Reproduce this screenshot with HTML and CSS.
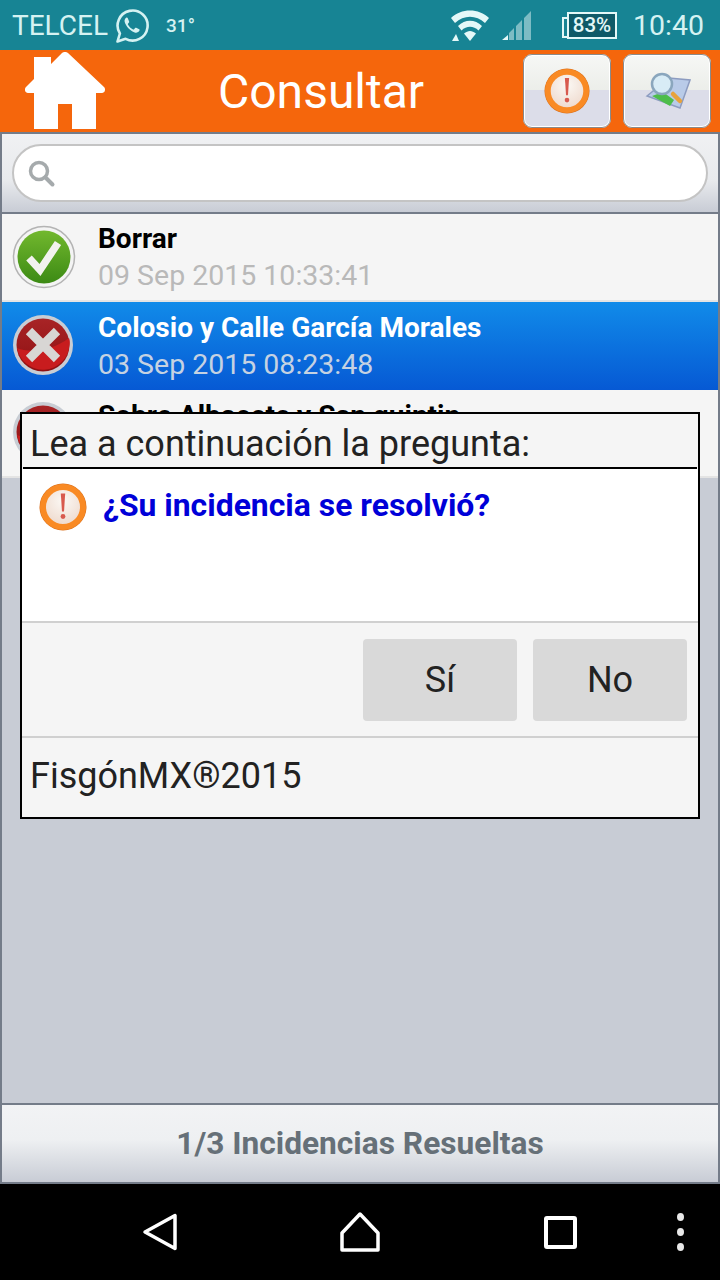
FILE: index.html
```html
<!DOCTYPE html>
<html lang="es">
<head>
    <meta charset="UTF-8">
    <meta name="viewport" content="width=device-width, initial-scale=1.0">
    <title>Consultar</title>
    <link rel="stylesheet" href="styles.css">
</head>
<body>
    <svg class="icon-defs" width="0" height="0">
        <defs>
            <radialGradient id="alert-face" cx="50%" cy="35%" r="65%">
                <stop offset="0" stop-color="#fbf8f4"/>
                <stop offset="1" stop-color="#eed8cb"/>
            </radialGradient>
            <linearGradient id="green-face" x1="0" y1="0" x2="0" y2="1">
                <stop offset="0" stop-color="#72b82e"/>
                <stop offset="1" stop-color="#3c8a14"/>
            </linearGradient>
            <linearGradient id="red-face" x1="0" y1="0" x2="0" y2="1">
                <stop offset="0" stop-color="#a82426"/>
                <stop offset="1" stop-color="#8e1012"/>
            </linearGradient>
            <symbol id="alert" viewBox="0 0 48 48">
                <circle cx="24" cy="24" r="23.500" fill="#d96f1c"/>
                <circle cx="24" cy="24" r="20" fill="url(#alert-face)" stroke="#f98a24" stroke-width="6"/>
                <path d="M21.800 10.500h4.400l-1.200 18h-2z" fill="#d85a4e"/>
                <circle cx="24" cy="33.500" r="2.400" fill="#d85a4e"/>
            </symbol>
            <symbol id="red-disc" viewBox="0 0 64 64">
                <circle cx="31" cy="31" r="30" fill="#c8cdd4"/>
                <circle cx="31" cy="31" r="26.500" fill="url(#red-face)"/>
                <path d="M5 34c14 6 36 2 52-10 1 3 1 5 .500 7A26.500 26.500 0 0 1 5 34z" fill="#c81c1e"/>
            </symbol>
        </defs>
    </svg>

    <div class="status-bar">
        <div class="status-left">
            <span class="carrier">TELCEL</span>
            <svg class="whatsapp" viewBox="0 0 34 36" width="34" height="36">
                <path d="M2.500 33.500l2.400-8A15 15 0 1 1 10.600 30.800z" fill="none" stroke="#d5f2f2" stroke-width="2.600" stroke-linejoin="round"/>
                <path d="M11.500 9.500c-1.500 1-2.300 2.500-1.800 4.500 1 4 5.500 9 10 10.500 2 .6 3.800-.2 4.800-1.900.3-.6.200-1-.3-1.300l-3-1.500c-.5-.2-.8-.1-1.100.3l-1 1.200c-.3.300-.6.400-1 .2-2.200-1-4-2.700-5.200-4.900-.2-.4-.1-.7.200-1l.9-1.100c.3-.4.300-.7.100-1.100l-1.300-3.200c-.3-.7-.7-.9-1.300-.7z" fill="#d5f2f2"/>
            </svg>
            <span class="temp">31°</span>
        </div>
        <div class="status-right">
            <svg class="wifi" viewBox="0 0 40 32" width="40" height="32">
                <path d="M1 8C11 -2 29 -2 39 8l-4 5C26 4.500 14 4.500 5 13z" fill="#e4f8f8"/>
                <path d="M8 16C15 9 25 9 32 16l-3.500 4.500C23.500 15.500 16.500 15.500 11.500 20.500z" fill="#e4f8f8"/>
                <path d="M14 23.500c4-3.500 8-3.500 12 0L20 31z" fill="#e4f8f8"/>
                <path d="M2 31l4-7 3 7z" fill="#e4f8f8"/>
            </svg>
            <svg class="signal" viewBox="0 0 30 30" width="30" height="30">
                <path d="M0 29l6-5v5z" fill="#e4f8f8"/>
                <path d="M7 22l5-5v12H7zM14 15l6-6v20h-6zM22 7l7-7v29h-7z" fill="#7dbcc4"/>
            </svg>
            <div class="battery"><span>83%</span></div>
            <span class="clock">10:40</span>
        </div>
    </div>

    <header class="app-header">
        <svg class="home-icon" viewBox="0 0 84 80" width="84" height="80">
            <path d="M41 1a4 4 0 0 1 3 1l36 34c2 2 1 6-2 6h-6v36H48V53H34v25H10V42H4c-3 0-4-4-2-6l8-8V6h17v7L38 2a4 4 0 0 1 3-1z" fill="#fff"/>
        </svg>
        <h1>Consultar</h1>
        <div class="header-buttons">
            <button class="tool-btn"><svg width="46" height="46"><use href="#alert"/></svg></button>
            <button class="tool-btn">
                <svg viewBox="0 0 48 42" width="48" height="42">
                    <path d="M4 26L26 8l21 2-10 28z" fill="#b9cbe8" stroke="#8d9cc0" stroke-width="1.500"/>
                    <path d="M9 26l11-4 11 8-4 6z" fill="#4dbd4a"/>
                    <path d="M30 24l7 7" stroke="#e8a23c" stroke-width="4.500" stroke-linecap="round"/>
                    <circle cx="19" cy="14" r="10" fill="#d8ecf6" stroke="#8aa6bd" stroke-width="2.500"/>
                </svg>
            </button>
        </div>
    </header>

    <div class="search-bar">
        <div class="search-box">
            <svg viewBox="0 0 30 30" width="30" height="30">
                <circle cx="13" cy="13" r="8.500" fill="none" stroke="#a5aaac" stroke-width="3.500"/>
                <path d="M19.500 19.500l7 7" stroke="#a5aaac" stroke-width="4" stroke-linecap="round"/>
            </svg>
        </div>
    </div>

    <main class="content">
        <ul class="list">
            <li class="list-item">
                <svg class="state-icon" viewBox="0 0 64 64" width="64" height="64">
                    <circle cx="32" cy="32" r="30.500" fill="#f4f4f4" stroke="#b4b4b4" stroke-width="1.500"/>
                    <circle cx="32" cy="32" r="26.500" fill="url(#green-face)"/>
                    <path d="M17 33l11 12 18-27" fill="none" stroke="#f2f2ee" stroke-width="7.500"/>
                </svg>
                <div class="item-text">
                    <div class="item-title">Borrar</div>
                    <div class="item-date">09 Sep 2015 10:33:41</div>
                </div>
            </li>
            <li class="list-item selected">
                <svg class="state-icon" width="64" height="64">
                    <use href="#red-disc"/>
                    <path d="M17 17l28 28M45 17L17 45" stroke="#d8d6d4" stroke-width="9"/>
                </svg>
                <div class="item-text">
                    <div class="item-title">Colosio y Calle García Morales</div>
                    <div class="item-date">03 Sep 2015 08:23:48</div>
                </div>
            </li>
            <li class="list-item">
                <svg class="state-icon" width="64" height="64"><use href="#red-disc"/></svg>
                <div class="item-text">
                    <div class="item-title">Sobre Albacete y San quintin</div>
                </div>
            </li>
        </ul>
    </main>

    <footer class="app-footer">1/3 Incidencias Resueltas</footer>

    <nav class="nav-bar">
        <svg viewBox="0 0 36 38" width="36" height="38" class="nav-icon">
            <path d="M33 2.500v33L3 19z" fill="none" stroke="#fff" stroke-width="3.500" stroke-linejoin="round"/>
        </svg>
        <svg viewBox="0 0 40 40" width="40" height="40" class="nav-icon">
            <path d="M20 2L38 21v17H2V21z" fill="none" stroke="#fff" stroke-width="3.500" stroke-linejoin="round"/>
        </svg>
        <div class="nav-square"></div>
        <div class="nav-dots"><i></i><i></i><i></i></div>
    </nav>

    <div class="dialog">
        <div class="dialog-title">Lea a continuación la pregunta:</div>
        <div class="dialog-body">
            <svg width="48" height="48"><use href="#alert"/></svg>
            <span class="dialog-question">¿Su incidencia se resolvió?</span>
        </div>
        <div class="dialog-actions">
            <button class="dialog-btn">Sí</button>
            <button class="dialog-btn">No</button>
        </div>
        <div class="dialog-foot">FisgónMX®2015</div>
    </div>
</body>
</html>
```

FILE: styles.css
```css
* {
    box-sizing: border-box;
}

body {
    font-family: 'Roboto', sans-serif;
    margin: 0;
    width: 720px;
    height: 1280px;
    display: flex;
    flex-direction: column;
    position: relative;
    overflow: hidden;
    background-color: #c8ccd5;
}

.icon-defs {
    position: absolute;
}

.status-bar {
    height: 50px;
    background-color: #178494;
    color: #d5f2f2;
    display: flex;
    justify-content: space-between;
    align-items: center;
    padding: 0 16px 0 12px;
    flex-shrink: 0;
}

.status-left,
.status-right {
    display: flex;
    align-items: center;
}

.carrier {
    font-size: 28px;
}

.whatsapp {
    margin-left: 7px;
    margin-top: 1px;
}

.temp {
    font-size: 19px;
    font-weight: 500;
    margin-left: 17px;
}

.wifi {
    margin-top: 1px;
}

.signal {
    margin-left: 12px;
    margin-top: 1px;
}

.battery {
    margin-left: 35px;
    width: 50px;
    height: 27px;
    background-color: #0f5a68;
    border: 2px solid #e4f8f8;
    display: flex;
    align-items: center;
    justify-content: center;
    color: #e4f8f8;
    font-size: 20.500px;
    font-weight: 500;
    position: relative;
}

.battery::before {
    content: '';
    position: absolute;
    left: -7px;
    top: 3px;
    width: 5px;
    height: 17px;
    border: 2px solid #e4f8f8;
    border-right: none;
}

.clock {
    font-size: 28.500px;
    margin-left: 16px;
}

.app-header {
    height: 82px;
    background-color: #f5660c;
    display: flex;
    align-items: center;
    padding: 0 9px 0 24px;
    flex-shrink: 0;
    position: relative;
}

.app-header h1 {
    color: white;
    font-size: 48px;
    font-weight: 400;
    margin: 0 0 0 110px;
    flex: 1;
}

.header-buttons {
    display: flex;
    gap: 12px;
}

.tool-btn {
    width: 88px;
    height: 74px;
    padding: 0;
    border: 2px solid white;
    outline: 1px solid #8a8a8a;
    outline-offset: -1px;
    border-radius: 9px;
    background: linear-gradient(#f6f7f5 0, #eceeea 48%, #dcdde9 49%, #dcdde9 100%);
    display: flex;
    align-items: center;
    justify-content: center;
}

.search-bar {
    height: 82px;
    border: 2px solid #747c89;
    background: linear-gradient(#f0f1f3 0, #e8eaed 60%, #c8ccd5 100%);
    padding: 10px 10px 0;
    flex-shrink: 0;
}

.search-box {
    height: 58px;
    background-color: white;
    border: 2px solid #c4c4c4;
    border-radius: 29px;
    display: flex;
    align-items: center;
    padding-left: 12px;
}

.content {
    flex: 1;
    border-left: 2px solid #747c89;
    border-right: 2px solid #747c89;
    min-height: 0;
}

.list {
    list-style: none;
    margin: 0;
    padding: 0;
}

.list-item {
    height: 88px;
    background-color: #f5f5f5;
    display: flex;
    align-items: center;
    padding-left: 10px;
    border-bottom: 2px solid #e4e4e4;
}

.list-item.selected {
    background: linear-gradient(#118be9, #0659d4);
    border-bottom: none;
}

.state-icon {
    flex-shrink: 0;
}

.item-text {
    margin-left: 22px;
    min-height: 74px;
    padding-top: 2px;
}

.item-title {
    font-size: 28px;
    font-weight: 700;
    color: black;
    line-height: 36px;
}

.item-date {
    font-size: 28.500px;
    color: #b9b9b9;
    line-height: 38px;
}

.selected .item-title {
    color: white;
}

.selected .item-date {
    color: #c5d2e2;
}

.app-footer {
    height: 81px;
    border: 2px solid #747c89;
    background: linear-gradient(#f2f3f5 0, #eef0f2 45%, #c8ccd5 100%);
    color: #667078;
    font-size: 31.700px;
    font-weight: 700;
    display: flex;
    align-items: center;
    justify-content: center;
    flex-shrink: 0;
}

.nav-bar {
    height: 96px;
    background-color: black;
    flex-shrink: 0;
    display: grid;
    grid-template-columns: 200px 200px 200px 40px;
    justify-items: center;
    align-items: center;
    padding-left: 60px;
}

.nav-square {
    width: 33px;
    height: 33px;
    border: 4px solid white;
    border-radius: 3px;
}

.nav-dots {
    display: flex;
    flex-direction: column;
    gap: 7px;
    align-items: center;
}

.nav-dots i {
    width: 7px;
    height: 8px;
    border-radius: 50%;
    background-color: #e8e8e8;
}

.dialog {
    position: absolute;
    left: 20px;
    top: 412px;
    width: 680px;
    height: 407px;
    border: 2px solid black;
    background-color: #f5f5f5;
    display: flex;
    flex-direction: column;
}

.dialog-title {
    height: 55px;
    border-bottom: 2px solid black;
    font-size: 36px;
    color: #222;
    padding: 9px 0 0 7px;
    margin: 0 1px;
    white-space: nowrap;
}

.dialog-body {
    height: 154px;
    background-color: white;
    border-bottom: 2px solid #d0d0d0;
    display: flex;
    align-items: flex-start;
    padding: 14px 0 0 17px;
    gap: 16px;
}

.dialog-question {
    color: #0000d8;
    font-size: 31.900px;
    font-weight: 700;
    margin-top: 3px;
}

.dialog-actions {
    height: 115px;
    border-bottom: 2px solid #d0d0d0;
    display: flex;
    justify-content: flex-end;
    align-items: center;
    gap: 16px;
    padding-right: 11px;
}

.dialog-btn {
    width: 154px;
    height: 82px;
    background-color: #d9d9d9;
    border: none;
    border-radius: 4px;
    font-family: 'Roboto', sans-serif;
    font-size: 36px;
    color: #222;
}

.dialog-foot {
    flex: 1;
    font-size: 36px;
    color: #222;
    padding: 17px 0 0 8px;
}
```
